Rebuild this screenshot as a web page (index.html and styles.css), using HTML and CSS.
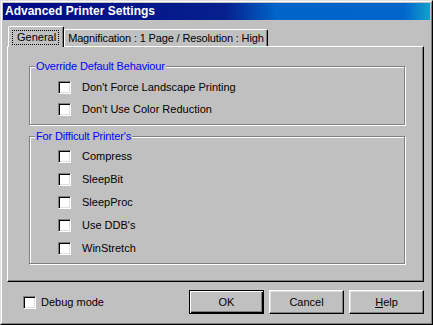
FILE: index.html
```html
<!DOCTYPE html>
<html lang="en">
<head>
    <meta charset="UTF-8">
    <title>Advanced Printer Settings</title>
    <link rel="stylesheet" href="styles.css">
</head>
<body>
    <div class="window">
        <div class="frame">
            <div class="titlebar">Advanced Printer Settings</div>

            <div class="content">
                <div class="tabs">
                    <div class="tab selected"><span class="focus">General</span></div>
                    <div class="tab">Magnification : 1 Page / Resolution : High</div>
                </div>

                <div class="panel">
                    <fieldset class="group group-override">
                        <legend>Override Default Behaviour</legend>
                        <label class="check"><span class="box"></span>Don't Force Landscape Printing</label>
                        <label class="check"><span class="box"></span>Don't Use Color Reduction</label>
                    </fieldset>

                    <fieldset class="group group-difficult">
                        <legend>For Difficult Printer's</legend>
                        <label class="check"><span class="box"></span>Compress</label>
                        <label class="check"><span class="box"></span>SleepBit</label>
                        <label class="check"><span class="box"></span>SleepProc</label>
                        <label class="check"><span class="box"></span>Use DDB's</label>
                        <label class="check"><span class="box"></span>WinStretch</label>
                    </fieldset>
                </div>

                <div class="footer">
                    <label class="check debug"><span class="box"></span>Debug mode</label>
                    <div class="buttons">
                        <button class="btn default">OK</button>
                        <button class="btn">Cancel</button>
                        <button class="btn"><u>H</u>elp</button>
                    </div>
                </div>
            </div>
        </div>
    </div>
</body>
</html>
```

FILE: styles.css
```css
body {
    margin: 0;
    padding: 0;
    font-family: "Liberation Sans", Arial, sans-serif;
    font-size: 11px;
    color: #000;
}

.window {
    width: 433px;
    height: 325px;
    box-sizing: border-box;
    background: #c0c0c0;
    border: 1px solid;
    border-color: #dfdfdf #000 #000 #dfdfdf;
}

.frame {
    height: 100%;
    box-sizing: border-box;
    border: 1px solid;
    border-color: #fff #808080 #808080 #fff;
    padding: 1px;
    display: flex;
    flex-direction: column;
}

.titlebar {
    height: 17px;
    line-height: 17px;
    padding-left: 2px;
    color: #fff;
    font-weight: bold;
    font-size: 12px;
    background: linear-gradient(to right, #000a86 0%, #06208e 52%, #0064c8 64%, #0066cc 94%, #14a0cc 100%);
}

.content {
    flex: 1;
    display: flex;
    flex-direction: column;
    padding: 6px 6px 0 4px;
}

/* tabs */
.tabs {
    display: flex;
    align-items: flex-end;
    height: 20px;
    padding-left: 1px;
    position: relative;
    z-index: 1;
}

.tab {
    height: 17px;
    line-height: 16px;
    box-sizing: border-box;
    padding: 0 3px 0 3px;
    border: 1px solid;
    border-bottom: none;
    border-color: #fff #000 transparent #fff;
    border-radius: 2px 2px 0 0;
    box-shadow: inset -1px 0 #808080;
    white-space: nowrap;
    letter-spacing: -0.15px;
}

.tab.selected {
    height: 21px;
    margin-bottom: -1px;
    padding: 2px 4px 0 3px;
    background: #c0c0c0;
    letter-spacing: 0;
}

.focus {
    display: inline-block;
    padding: 0 2px 0 4px;
    line-height: 13px;
    border: 1px dotted #000;
}

.panel {
    height: 236px;
    box-sizing: border-box;
    border: 1px solid;
    border-color: #fff #000 #000 #fff;
    box-shadow: inset -1px -1px #808080;
    padding: 13px 18px 0 21px;
    display: flex;
    flex-direction: column;
    gap: 5px;
}

/* group boxes */
.group {
    margin: 0;
    border: 1px solid #808080;
    box-shadow: inset 1px 1px #fff, 1px 1px #fff;
    padding: 8px 0 0 0;
    display: flex;
    flex-direction: column;
    box-sizing: border-box;
}

.group legend {
    color: #0000ff;
    padding: 0 1px;
    margin-left: 5px;
    background: #c0c0c0;
    line-height: 13px;
    letter-spacing: -0.15px;
}

.group .check {
    margin-left: 28px;
}

.group-override {
    height: 65px;
    gap: 9px;
}

.group-difficult {
    height: 134px;
    gap: 10px;
    padding-top: 7px;
}

.check {
    display: flex;
    align-items: center;
    gap: 11px;
    height: 13px;
    line-height: 13px;
}

.box {
    width: 13px;
    height: 13px;
    box-sizing: border-box;
    flex: none;
    background: #fff;
    border: 1px solid;
    border-color: #808080 #fff #fff #808080;
    box-shadow: inset 1px 1px #000, inset -1px -1px #dfdfdf;
}

/* footer */
.footer {
    flex: 1;
    display: flex;
    align-items: center;
    justify-content: space-between;
    padding: 0 0 0 16px;
}

.debug {
    gap: 5px;
}

.buttons {
    display: flex;
    gap: 5px;
}

.btn {
    width: 75px;
    height: 24px;
    box-sizing: border-box;
    font-family: "Liberation Sans", Arial, sans-serif;
    font-size: 11px;
    color: #000;
    background: #c0c0c0;
    border: 1px solid;
    border-color: #fff #000 #000 #fff;
    box-shadow: inset -1px -1px #808080, inset 1px 1px #dfdfdf;
    padding: 0;
}

.btn.default {
    border: 1px solid #000;
    box-shadow: inset 1px 1px #fff, inset -1px -1px #000, inset -2px -2px #808080;
}

.btn u {
    text-decoration: underline;
}
```
